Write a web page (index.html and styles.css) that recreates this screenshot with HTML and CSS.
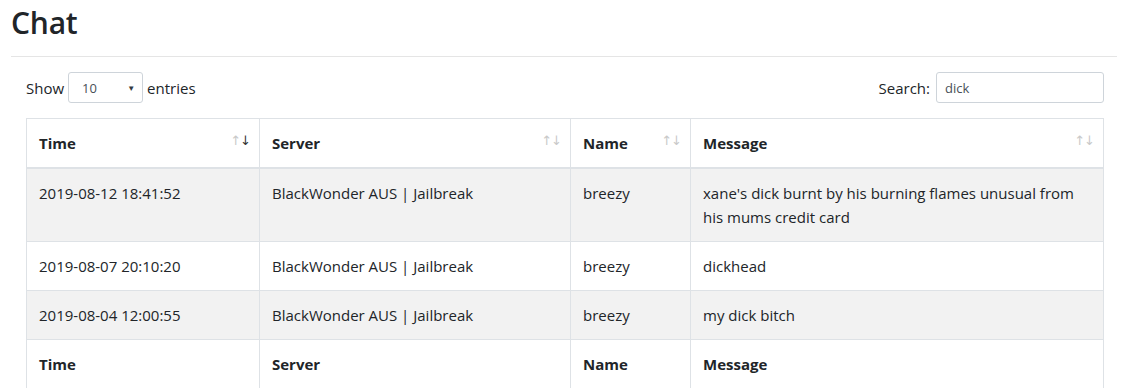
FILE: index.html
```html
<!DOCTYPE html>
<html>
<head>
<meta charset="utf-8">
<link rel="stylesheet" href="styles.css">
</head>
<body>
<div class="page">
  <h2 class="title">Chat</h2>
  <hr class="rule">
  <div class="wrapper">
    <div class="controls">
      <label class="length">Show
        <span class="select"><span class="select-value">10</span><span class="select-arrow">▼</span></span>
        entries</label>
      <label class="search">Search:
        <span class="input">dick</span></label>
    </div>
    <table class="table">
      <thead>
        <tr>
          <th class="c-time sorted-desc">Time<span class="sort"><span class="up">↑</span><span class="down">↓</span></span></th>
          <th class="c-server">Server<span class="sort"><span class="up">↑</span><span class="down">↓</span></span></th>
          <th class="c-name">Name<span class="sort"><span class="up">↑</span><span class="down">↓</span></span></th>
          <th class="c-msg">Message<span class="sort"><span class="up">↑</span><span class="down">↓</span></span></th>
        </tr>
      </thead>
      <tbody>
        <tr class="odd">
          <td>2019-08-12 18:41:52</td>
          <td>BlackWonder AUS | Jailbreak</td>
          <td>breezy</td>
          <td>xane's dick burnt by his burning flames unusual from his mums credit card</td>
        </tr>
        <tr>
          <td>2019-08-07 20:10:20</td>
          <td>BlackWonder AUS | Jailbreak</td>
          <td>breezy</td>
          <td>dickhead</td>
        </tr>
        <tr class="odd">
          <td>2019-08-04 12:00:55</td>
          <td>BlackWonder AUS | Jailbreak</td>
          <td>breezy</td>
          <td>my dick bitch</td>
        </tr>
      </tbody>
      <tfoot>
        <tr>
          <th>Time</th>
          <th>Server</th>
          <th>Name</th>
          <th>Message</th>
        </tr>
      </tfoot>
    </table>
  </div>
</div>
</body>
</html>
```

FILE: styles.css
```css
html, body {
  margin: 0;
  padding: 0;
  background: #fff;
}
body {
  font-family: "Open Sans", "Noto Sans", sans-serif;
  font-size: 15px;
  line-height: 24px;
  color: #212529;
}
.page {
  padding: 0 8px 0 11px;
}
.title {
  margin: 0;
  padding-top: 3px;
  font-size: 30px;
  line-height: 40px;
  font-weight: 600;
  letter-spacing: -0.2px;
  color: #212529;
}
.rule {
  margin: 13px 2px 0 0;
  border: 0;
  border-top: 1px solid #e5e5e5;
  height: 0;
}
.wrapper {
  padding: 15px 15px 0 15px;
}
.controls {
  display: flex;
  justify-content: space-between;
  align-items: center;
  height: 31px;
}
.length, .search {
  display: flex;
  align-items: center;
  gap: 4px;
  font-weight: 400;
  white-space: nowrap;
}
.select {
  display: flex;
  align-items: center;
  justify-content: space-between;
  box-sizing: border-box;
  width: 75px;
  height: 31px;
  padding: 0 7px 0 13px;
  border: 1px solid #ced4da;
  border-radius: 3px;
  font-size: 13px;
  color: #495057;
}
.select-arrow {
  font-size: 8px;
  color: #343a40;
}
.search {
  gap: 6px;
}
.input {
  display: flex;
  align-items: center;
  box-sizing: border-box;
  width: 168px;
  height: 31px;
  padding: 0 8px;
  border: 1px solid #ced4da;
  border-radius: 3px;
  font-size: 13px;
  color: #495057;
}
.table {
  margin-top: 15px;
  width: 1078px;
  border-collapse: collapse;
  table-layout: fixed;
}
.table th, .table td {
  border: 1px solid #dee2e6;
  padding: 12px 12px;
  text-align: left;
  vertical-align: top;
}
.table th {
  font-weight: 700;
  position: relative;
}
.table thead th {
  border-bottom: 2px solid #dee2e6;
}
.c-time { width: 208px; }
.c-server { width: 286px; }
.c-name { width: 95px; }
.c-msg { width: auto; }
.table tbody tr.odd td {
  background: #f2f2f2;
}
.sort {
  position: absolute;
  right: 9px;
  top: 10px;
  font-family: "DejaVu Sans", sans-serif;
  font-size: 13px;
  font-weight: 400;
  letter-spacing: -1px;
  line-height: 24px;
}
.sort span {
  color: #c9c9c9;
}
.sorted-desc .sort .down {
  color: #333;
}
```
